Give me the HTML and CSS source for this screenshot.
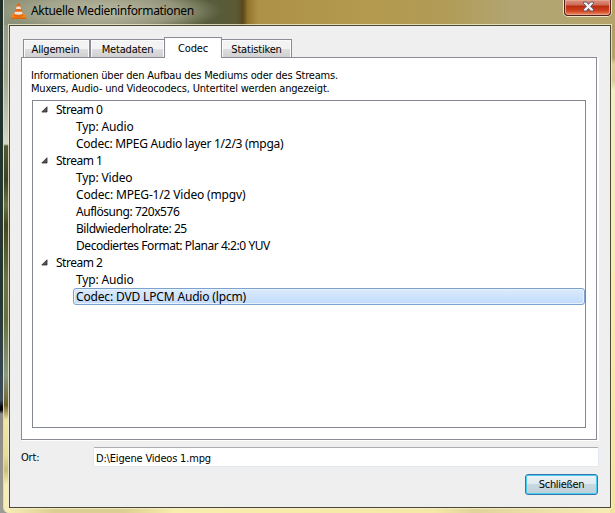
FILE: index.html
```html
<!DOCTYPE html>
<html lang="de">
<head>
<meta charset="utf-8">
<title>Aktuelle Medieninformationen</title>
<link rel="stylesheet" href="styles.css">
</head>
<body>
<div class="window">
  <header class="titlebar">
    <svg class="cone" width="16" height="17" viewBox="0 0 16 17">
      <path d="M1.500 11h12l1.700 4.500H.2z" fill="#f58a1c"/>
      <path d="M.5 14.500h14.500l.3 1.500H.2z" fill="#d9650a"/>
      <path d="M6.200 .5h2.600L12.500 13q-5 2.300-10 0z" fill="#e8690f"/>
      <path d="M5.600 3.500h3.800l.8 2.500H4.900z" fill="#e4e2dc"/>
      <path d="M4 8.700h7l.7 2.300q-4.200 1.600-8.400 0z" fill="#e9e7e2"/>
    </svg>
    <h1 class="title">Aktuelle Medieninformationen</h1>
    <button class="close" aria-label="Fenster schließen">
      <svg width="13" height="11" viewBox="0 0 13 11"><path d="M1.500 1h3l2 2.400L8.500 1h3v1.500L8.600 5.300l2.900 3V10h-3l-2-2.500-2 2.500h-3V8.300l2.900-3-2.900-2.800z" fill="#f3f3f5" stroke="#565c73"/></svg>
    </button>
  </header>
  <main class="client">
    <nav class="tabs">
      <div class="tab general">Allgemein</div>
      <div class="tab meta">Metadaten</div>
      <div class="tab active">Codec</div>
      <div class="tab stats">Statistiken</div>
    </nav>
    <section class="page">
      <p class="info"><span class="line1">Informationen über den Aufbau des Mediums oder des Streams.</span><br><span class="line2">Muxers, Audio- und Videocodecs, Untertitel werden angezeigt.</span></p>
      <div class="tree">
        <div class="row parent"><svg class="arrow" viewBox="0 0 7 7"><path d="M6 .8V6H.8z"/></svg>Stream 0</div>
        <div class="row">Typ: Audio</div>
        <div class="row snug">Codec: MPEG Audio layer 1/2/3 (mpga)</div>
        <div class="row parent"><svg class="arrow" viewBox="0 0 7 7"><path d="M6 .8V6H.8z"/></svg>Stream 1</div>
        <div class="row">Typ: Video</div>
        <div class="row">Codec: MPEG-1/2 Video (mpgv)</div>
        <div class="row tight">Auflösung: 720x576</div>
        <div class="row tight">Bildwiederholrate: 25</div>
        <div class="row tight">Decodiertes Format: Planar 4:2:0 YUV</div>
        <div class="row parent"><svg class="arrow" viewBox="0 0 7 7"><path d="M6 .8V6H.8z"/></svg>Stream 2</div>
        <div class="row">Typ: Audio</div>
        <div class="row selected">Codec: DVD LPCM Audio (lpcm)</div>
      </div>
    </section>
    <div class="location">
      <span class="label">Ort:</span>
      <div class="field">D:\Eigene Videos 1.mpg</div>
    </div>
    <div class="actions"><button class="ok">Schließen</button></div>
  </main>
</div>
</body>
</html>
```
FILE: styles.css
```css
* { box-sizing: border-box; }
body {
  margin: 0;
  width: 615px;
  height: 513px;
  overflow: hidden;
  padding-left: 3px;
  background: linear-gradient(#203029 0, #263631 300px, #3c4d5c 400px, #050505 407px, #050505 410px, #8b8b84 414px, #9d9d95 100%);
  font: 11px/13px "DejaVu Sans Condensed", "DejaVu Sans", sans-serif;
  letter-spacing: -.18px;
  color: #000;
}
.window {
  height: 513px;
  padding: 0 4px 5px 5px;
  border-left: 1px solid #d8dacd;
  border-radius: 0 0 0 6px;
  background:
    radial-gradient(ellipse 112px 22px at 106px 11px, rgba(205,203,187,.75), rgba(185,183,162,.55) 65%, transparent),
    linear-gradient(90deg, #8d937a 0, #7d815e 110px, #565c3b 205px, #5b5a36 232px, #5a481d 239px, #94752b 244px, #ad9147 254px, #b39a4e 370px, #b19c56 440px, #b2a574 510px, #b4a46a 611px) 0 0 / 100% 25px no-repeat,
    linear-gradient(#8e9282 0, #a2aa94 80px, #d5d6c7 144px, #555932 146px, #3e4222 180px, #6b7344 205px, #44451e 225px, #6b7344 280px, #66703f 320px, #8a9a80 375px, #72602a 405px, #f1e5a7 420px, #e8dc9b 455px, #cabd80 470px, #f7edb3 485px) 0 0 / 6px 100% no-repeat,
    linear-gradient(#ac9b61 0, #b4a56b 58px, #ddd199 64px, #d8ca91 80px, #f3edc4 90px, #f8edb4 240px, #f4e39e 100%) 100% 0 / 5px 100% no-repeat,
    linear-gradient(90deg, #f8efb6 0, #ddcf91 50px, #ddcf91 120px, #f8eead 170px, #f5e8a6 430px, #e0d49a 470px, #f8edb3 100%);
}
.titlebar {
  display: flex;
  height: 25px;
  padding-left: 2px;
}
.cone { margin: 3px 0 0; }
.title {
  margin: 3px 0 0 4px;
  font: 12px/16px "Noto Sans", sans-serif;
  letter-spacing: -.33px;
  white-space: nowrap;
}
.close {
  width: 47px;
  height: 16px;
  margin: 0 0 0 auto;
  padding: 0 0 3px;
  display: flex;
  align-items: center;
  justify-content: center;
  border: 1px solid #52201a;
  border-top: 0;
  border-radius: 0 0 4px 4px;
  background: linear-gradient(#dc9284 0, #cd6c57 5px, #b92b0e 6px, #d14420 11px, #ed9269 100%);
  box-shadow: inset 0 0 0 1px #e6a38b, 0 0 0 1px #eee4c7;
}
.close svg { margin-left: 2px; }
.client {
  height: 483px;
  padding: 11px 11px 0 11px;
  border: 1px solid #4c4933;
  background: #efefef;
  box-shadow: 0 0 0 1px rgba(240,236,212,.8);
}
.tabs {
  display: flex;
  align-items: flex-end;
  height: 20px;
  padding-left: 2px;
}
.tab {
  height: 18px;
  padding-top: 3px;
  border: 1px solid #898c95;
  border-bottom: 0;
  background: linear-gradient(#f3f3f3 50%, #dedede 55%, #d0d0d0);
  box-shadow: inset 1px 1px #fbfbfb, inset -1px 0 #fbfbfb;
  text-align: center;
  white-space: nowrap;
}
.general { width: 67px; padding-right: 2px; }
.meta { width: 75px; }
.stats { width: 71px; }
.active {
  width: 58px;
  height: 21px;
  margin: 0 -1px;
  position: relative;
  top: 1px;
  padding-top: 4px;
  background: #fff;
}
.page {
  width: 576px;
  height: 383px;
  padding: 11px 10px 0;
  border: 1px solid #898c95;
  background: #fff;
  box-shadow: 1px 1px #fff, 2px 1px #fff;
}
.info { margin: 0 0 5px -1px; height: 26px; white-space: nowrap; }
.tree {
  height: 328px;
  border: 1px solid #828790;
  font: 12px/17px "Noto Sans", sans-serif;
  letter-spacing: -.16px;
}
.row {
  height: 17px;
  margin-left: 40px;
  padding-left: 3px;
  white-space: nowrap;
}
.snug { letter-spacing: -.27px; }
.tight { letter-spacing: -.45px; }
.parent {
  display: flex;
  align-items: center;
  margin-left: 8px;
  padding: 0;
  letter-spacing: -.5px;
}
.arrow { width: 7px; height: 7px; margin: 0 8px 0 0; fill: #595959; stroke: #262626; stroke-width: .8; }
.selected {
  padding-left: 2px;
  border: 1px solid #7da2ce;
  border-radius: 3px;
  line-height: 15px;
  background: linear-gradient(#dcebfc, #c1dbfc);
  box-shadow: inset 0 0 0 1px #e8f2fd;
}
.location {
  display: flex;
  height: 20px;
  margin-top: 7px;
}
.label { width: 72px; padding-top: 4px; }
.field {
  width: 506px;
  flex-shrink: 0;
  padding: 4px 2px 0;
  border: 1px solid #e2e8ef;
  border-top-color: #abadb3;
  border-radius: 2px;
  background: #fff;
}
.actions {
  display: flex;
  margin: 7px 0 0 504px;
}
.ok {
  width: 73px;
  height: 21px;
  flex-shrink: 0;
  padding: 0 0 1px;
  border: 1px solid #3277a8;
  border-radius: 3px;
  background: linear-gradient(#eef3f6 0, #dfe9ee 48%, #c9d8e0 50%, #bed0da);
  box-shadow: inset 0 0 0 1px #49cdf3;
  font: inherit;
  letter-spacing: -.3px;
  color: #000;
}
```
